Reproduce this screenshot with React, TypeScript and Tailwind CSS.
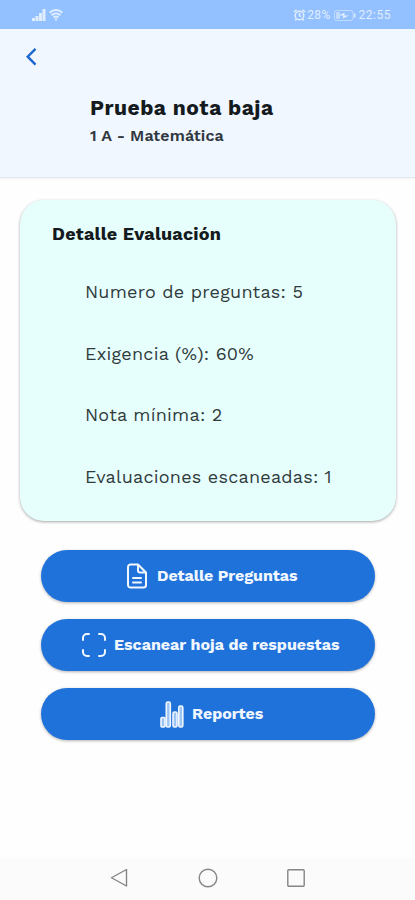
import type { ReactNode } from "react";

const details = [
    "Numero de preguntas: 5",
    "Exigencia (%): 60%",
    "Nota mínima: 2",
    "Evaluaciones escaneadas: 1",
];

function StatusBar() {
    return (
        <div className="flex h-[29px] items-center justify-between bg-[#93c0ff] pl-8 pr-6 pt-px text-[#e0edff]">
            <div className="flex items-center gap-[3px]">
                <svg width="14" height="12" viewBox="0 0 14 12" fill="currentColor">
                    <path d="M0 9h3v3H0zM3.5 7h3v5h-3zM7 4h3v8H7zM10.5 0h3v12h-3z" />
                </svg>
                <svg
                    width="14"
                    height="12"
                    viewBox="0 0 14 12"
                    fill="none"
                    stroke="currentColor"
                    strokeWidth="2"
                >
                    <path d="M.6 3.7C4.3.2 9.7.2 13.4 3.7M2.6 6.2c2.6-2.4 6.2-2.4 8.8 0M4.6 8.5c1.5-1.3 3.3-1.3 4.8 0" />
                    <path d="M6 10.5h2" />
                </svg>
            </div>
            <div className="flex items-center font-['Roboto',sans-serif] text-xs leading-none">
                <svg
                    className="mr-px"
                    width="13"
                    height="12"
                    viewBox="0 0 13 12"
                    fill="none"
                    stroke="currentColor"
                    strokeWidth="1.5"
                >
                    <circle cx="6.5" cy="6.5" r="4.3" />
                    <path d="M6.5 4v2.7l1.7 1M.8 3 3.6.8M12.2 3 9.4.8M3.5 10 2.2 11.5M9.5 10l1.3 1.5" />
                </svg>
                <span className="tracking-[0.4px]">28%</span>
                <svg className="ml-[3px]" width="22" height="11" viewBox="0 0 22 11">
                    <rect
                        x=".5"
                        y=".5"
                        width="18.5"
                        height="10"
                        rx="2"
                        fill="none"
                        stroke="currentColor"
                        opacity=".6"
                    />
                    <path d="M2 2h4v7H2z" fill="currentColor" opacity=".6" />
                    <path d="m10.5 2.5-5.5 3h4v3l6-3h-4.5z" fill="currentColor" />
                    <path d="M20 3.5h1.5v4H20z" fill="currentColor" />
                </svg>
                <span className="ml-[3px] tracking-[0.5px]">22:55</span>
            </div>
        </div>
    );
}

function ActionButton({
    icon,
    children,
    className,
}: {
    icon: ReactNode;
    children: ReactNode;
    className: string;
}) {
    return (
        <button
            className={`flex h-[52px] w-full items-center rounded-full bg-[#2072db] text-base font-bold text-[#f1f7ff] shadow-[0_1px_3px_rgba(0,0,0,0.3)] ${className}`}
        >
            {icon}
            <span className="whitespace-nowrap">{children}</span>
        </button>
    );
}

export default function App() {
    return (
        <div className="flex h-[900px] w-[415px] flex-col overflow-hidden bg-[#fefefe] font-['Work_Sans','Inter',sans-serif] text-[#141a1d]">
            <StatusBar />
            <header className="h-[149px] border-b border-[#e1e8f0] bg-[#f0f7ff] pt-[18px] shadow-[0_1px_2px_rgba(0,0,0,0.05)]">
                <button className="ml-[25px] block" aria-label="Volver">
                    <svg
                        width="12"
                        height="19"
                        viewBox="0 0 12 19"
                        fill="none"
                        stroke="#1e66cf"
                        strokeWidth="2.4"
                    >
                        <path d="M10.5 1.8 2.7 9.7l7.8 7.9" />
                    </svg>
                </button>
                <h1 className="ml-[90px] mt-[28px] text-[21px] font-bold leading-7 tracking-[0.5px]">
                    Prueba nota baja
                </h1>
                <p className="ml-[90px] mt-1 text-base font-semibold leading-5 tracking-[0.1px] text-[#30373f]">
                    1 A - Matemática
                </p>
            </header>

            <main className="flex-1">
                <section className="ml-5 mt-[22px] h-[321px] w-[376px] rounded-[24px] bg-[#e7fffc] pt-[22px] shadow-[0_1px_3px_rgba(0,0,0,0.35)]">
                    <h2 className="ml-8 text-lg font-bold leading-6 tracking-[0.22px]">
                        Detalle Evaluación
                    </h2>
                    <ul className="ml-[65px] mt-[15.5px]">
                        {details.map((text) => (
                            <li
                                key={text}
                                className="flex h-[61.5px] items-center text-lg tracking-[0.23px] text-[#303b3d]"
                            >
                                {text}
                            </li>
                        ))}
                    </ul>
                </section>

                <div className="ml-[41px] mt-[29px] flex w-[334px] flex-col gap-[17px]">
                    <ActionButton
                        className="pl-[86px] tracking-[-0.08px]"
                        icon={
                            <svg
                                className="mr-2.5"
                                width="20"
                                height="26"
                                viewBox="0 0 20 26"
                                fill="none"
                                stroke="currentColor"
                                strokeWidth="2"
                                strokeLinejoin="round"
                                strokeLinecap="round"
                            >
                                <path d="M11 1.5H3.5a2.5 2.5 0 0 0-2.500 2.500v18a2.500 2.500 0 0 0 2.500 2.500h13a2.500 2.500 0 0 0 2.500-2.500V9.500L11 1.500v6a2 2 0 0 0 2 2h6M6 15h8M6 19.500h8" />
                            </svg>
                        }
                    >
                        Detalle Preguntas
                    </ActionButton>
                    <ActionButton
                        className="pl-[41px]"
                        icon={
                            <svg
                                className="mr-2"
                                width="24"
                                height="24"
                                viewBox="0 0 24 24"
                                fill="none"
                                stroke="currentColor"
                                strokeWidth="2"
                                strokeLinecap="round"
                            >
                                <path d="M1 7V5a4 4 0 0 1 4-4h2M17 1h2a4 4 0 0 1 4 4v2M23 17v2a4 4 0 0 1-4 4h-2M7 23H5a4 4 0 0 1-4-4v-2" />
                            </svg>
                        }
                    >
                        Escanear hoja de respuestas
                    </ActionButton>
                    <ActionButton
                        className="pl-[119px]"
                        icon={
                            <svg
                                className="mr-2"
                                width="24"
                                height="27"
                                viewBox="0 0 24 27"
                                fill="#9cc4f4"
                                stroke="currentColor"
                                strokeWidth="1.6"
                            >
                                <rect x="1" y="16.5" width="4" height="9.5" rx="1" />
                                <rect x="6.3" y="1" width="4" height="25" rx="1.5" />
                                <rect x="13" y="11" width="4" height="15" rx="1.5" />
                                <rect x="18.8" y="5" width="4" height="21" rx="1.5" />
                            </svg>
                        }
                    >
                        Reportes
                    </ActionButton>
                </div>
            </main>

            <nav className="flex h-[42px] items-center bg-[#fbfbfb] pb-0.5 pl-[110px] text-[#858585]">
                <svg
                    width="18"
                    height="20"
                    viewBox="0 0 18 20"
                    fill="none"
                    stroke="currentColor"
                    strokeWidth="1.4"
                    strokeLinejoin="round"
                >
                    <path d="M16.5 1.500v16.500L1.500 9.750z" />
                </svg>
                <svg
                    className="ml-[70px]"
                    width="20"
                    height="20"
                    viewBox="0 0 20 20"
                    fill="none"
                    stroke="currentColor"
                    strokeWidth="1.4"
                >
                    <circle cx="10" cy="10" r="8.8" />
                </svg>
                <svg
                    className="ml-[69px]"
                    width="18"
                    height="18"
                    viewBox="0 0 18 18"
                    fill="none"
                    stroke="currentColor"
                    strokeWidth="1.4"
                >
                    <rect x=".8" y=".8" width="16.4" height="16.4" rx="1" />
                </svg>
            </nav>
        </div>
    );
}
